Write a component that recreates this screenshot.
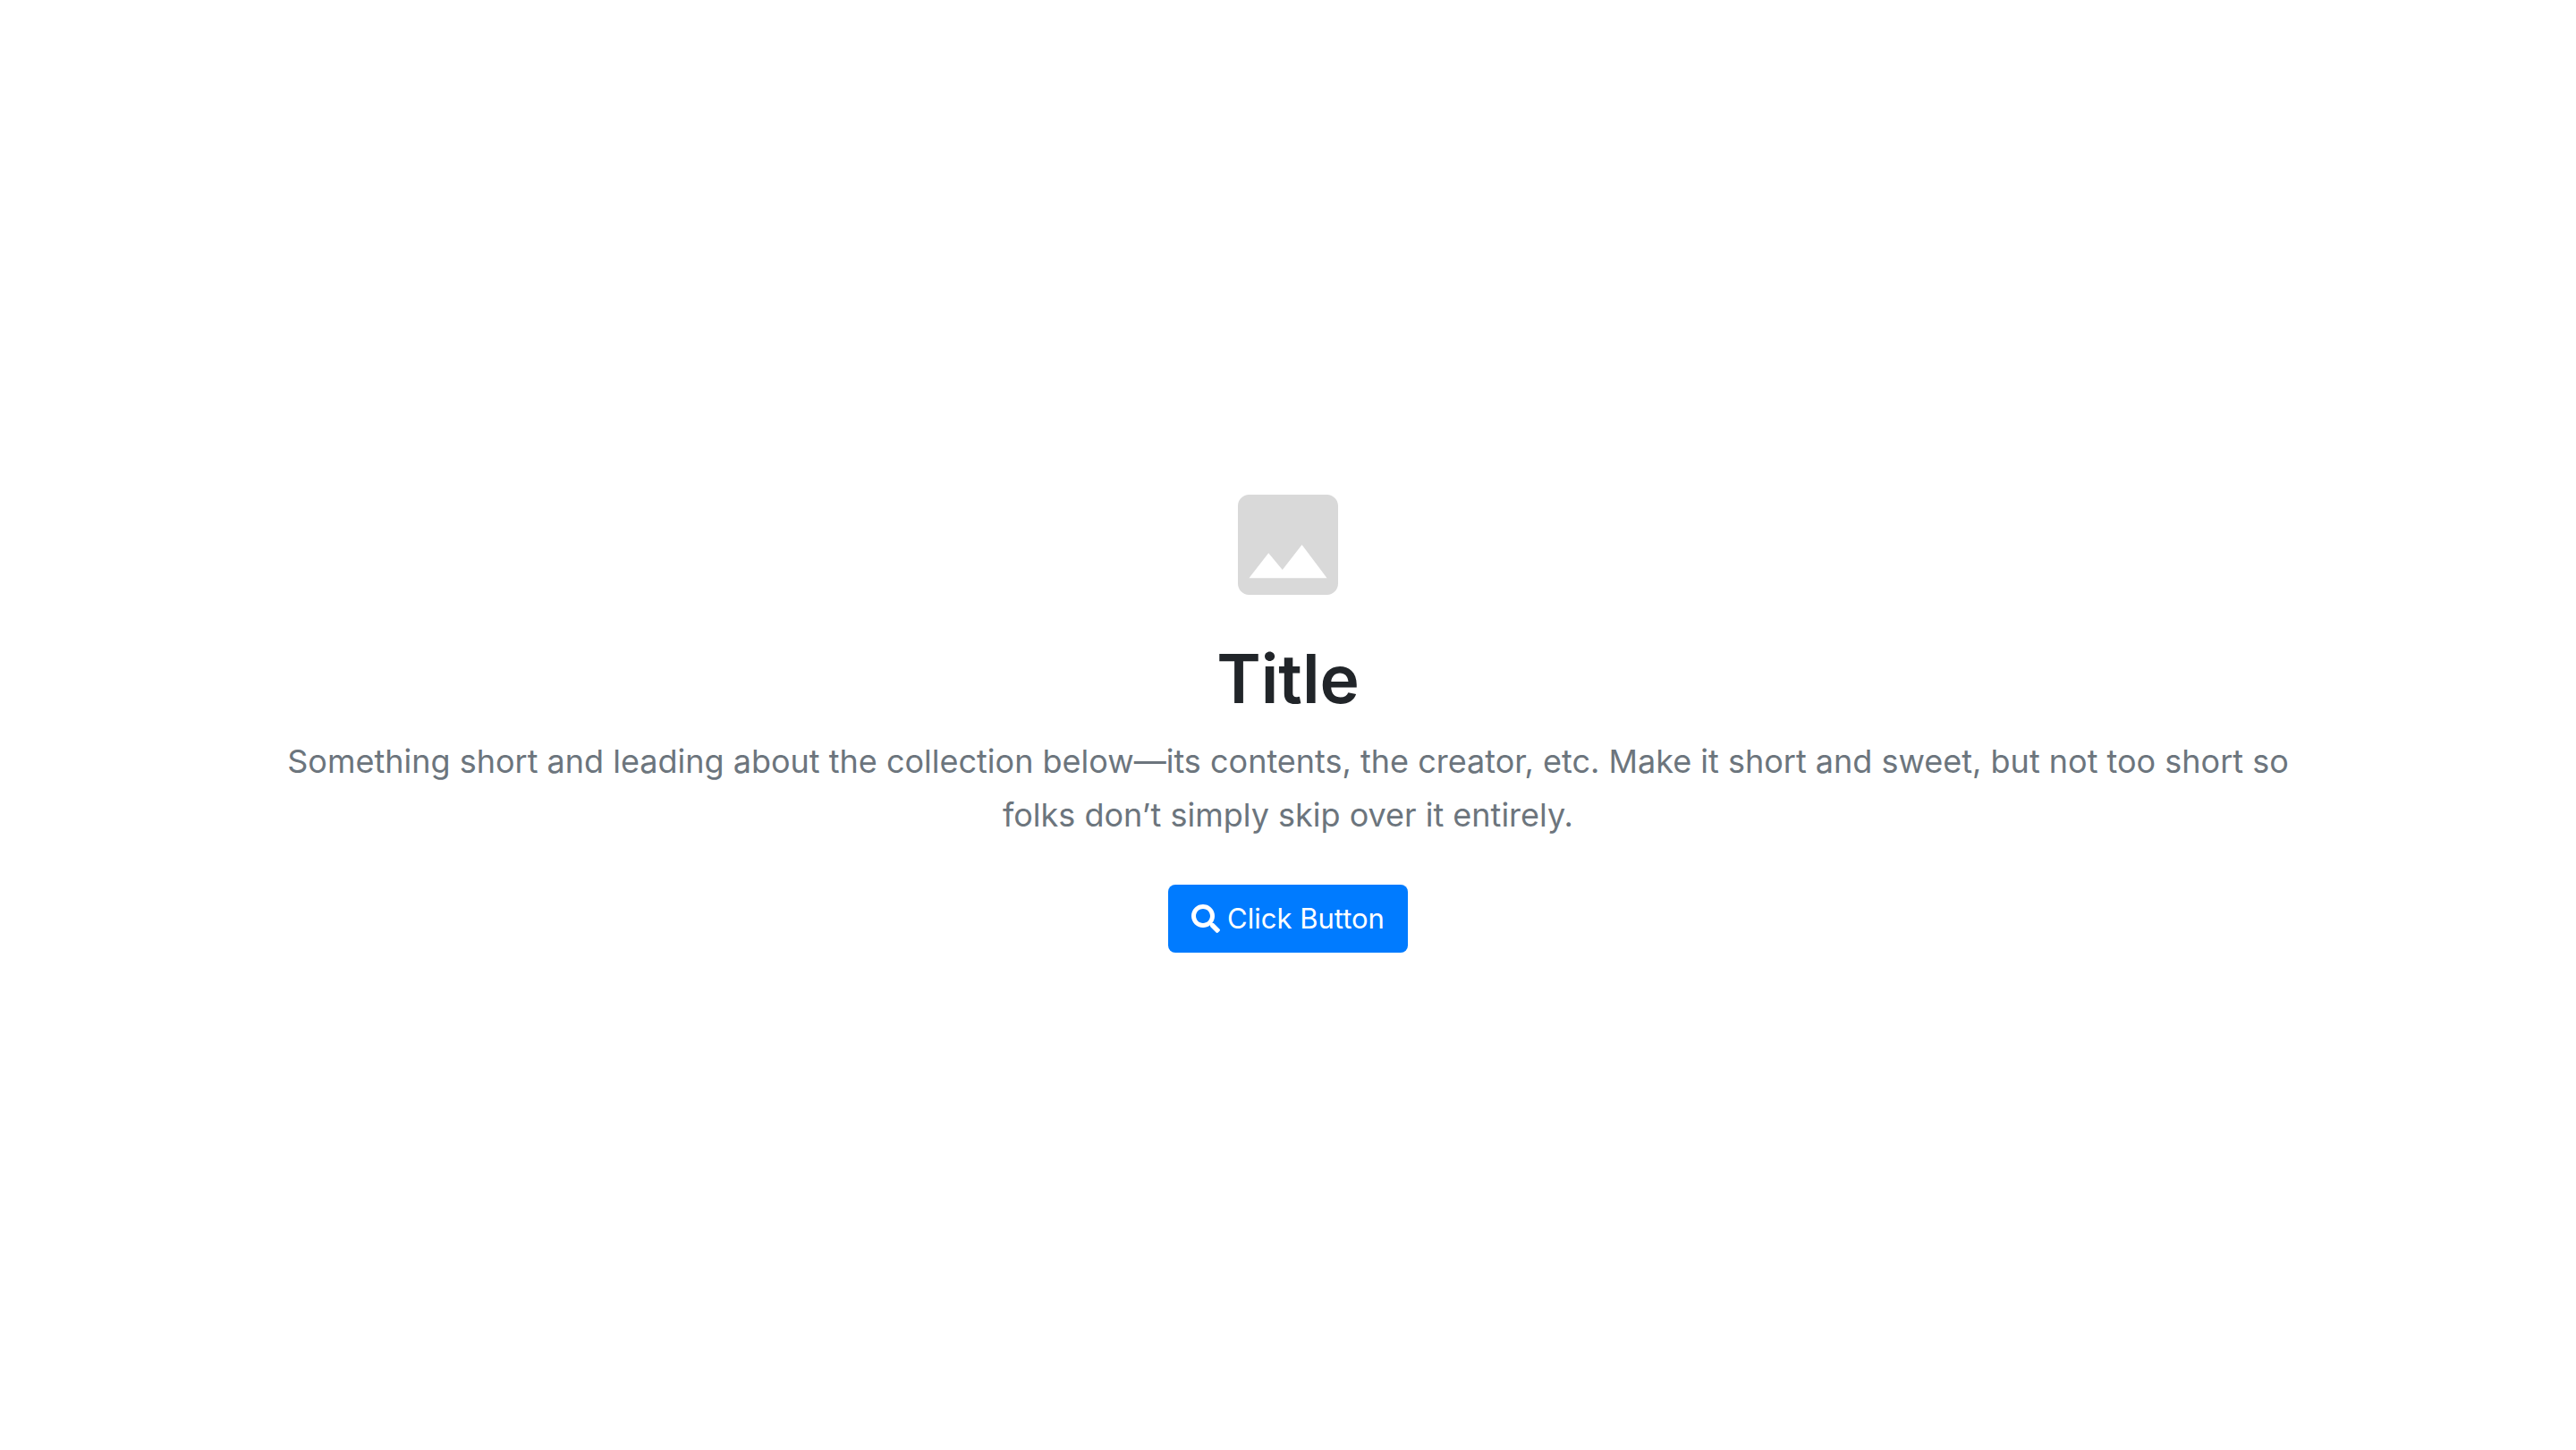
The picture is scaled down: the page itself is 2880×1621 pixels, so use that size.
<main class="hero">
  <svg class="picture" viewBox="3 3 18 18" aria-hidden="true">
    <path d="M21 19V5c0-1.100-.9-2-2-2H5c-1.100 0-2 .9-2 2v14c0 1.100.9 2 2 2h14c1.100 0 2-.9 2-2zM8.500 13.500l2.500 3.010L14.500 12l4.500 6H5l3.500-4.500z" />
  </svg>
  <h1>Title</h1>
  <p>Something short and leading about the collection below—its contents, the creator, etc. Make it short and sweet, but not too short so folks don’t simply skip over it entirely.</p>
  <button type="button">
    <svg class="search" viewBox="0 0 512 512" aria-hidden="true">
      <path d="M505 442.700L405.300 343c-4.500-4.500-10.600-7-17-7H372c27.600-35.300 44-79.700 44-128C416 93.100 322.900 0 208 0S0 93.100 0 208s93.100 208 208 208c48.300 0 92.700-16.400 128-44v16.300c0 6.400 2.500 12.500 7 17l99.700 99.700c9.400 9.400 24.600 9.400 33.900 0l28.300-28.300c9.400-9.400 9.400-24.600.1-34zM208 336c-70.700 0-128-57.200-128-128 0-70.700 57.200-128 128-128 70.700 0 128 57.200 128 128 0 70.700-57.200 128-128 128z" />
    </svg>
    <span>Click Button</span>
  </button>
</main>

<style>
  :global(body) {
    margin: 0;
    background: #fff;
  }
  .hero {
    box-sizing: border-box;
    min-height: 100vh;
    padding: 0 320px 4px;
    display: flex;
    flex-direction: column;
    align-items: center;
    justify-content: center;
    font-family: Inter, "Liberation Sans", sans-serif;
    text-align: center;
  }
  .picture {
    width: 112px;
    height: 112px;
    fill: #d9d9d9;
  }
  h1 {
    margin: 48px 0 16px;
    font-size: 75px;
    font-weight: 600;
    line-height: 92px;
    color: #212529;
  }
  p {
    margin: 0 0 48px;
    font-size: 36px;
    font-weight: 400;
    line-height: 60px;
    color: #6c757d;
  }
  button {
    display: flex;
    align-items: center;
    gap: 8px;
    padding: 14px 26px;
    border: 0;
    border-radius: 8px;
    background: #007bff;
    color: #fff;
    font: inherit;
    font-size: 31px;
    line-height: 48px;
    cursor: pointer;
  }
  .search {
    width: 32px;
    height: 32px;
    fill: currentColor;
  }
</style>
